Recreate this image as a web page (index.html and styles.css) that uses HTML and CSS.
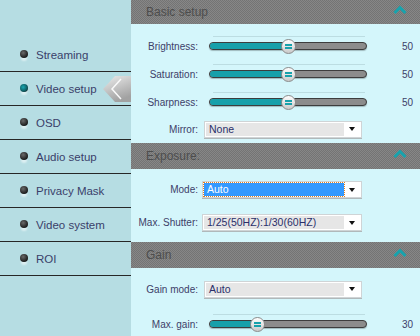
FILE: index.html
```html
<!DOCTYPE html>
<html lang="en">
  <head>
    <meta charset="UTF-8" />
    <title>Video setup</title>
    <link rel="stylesheet" href="styles.css">
  </head>
  <body>
    <div class="app">
      <nav class="menu">
        <ul>
          <li class="menu-item"><span class="dot"></span>Streaming</li>
          <li class="menu-item active"><span class="dot"></span>Video setup
            <svg class="pointer" width="28" height="28" viewBox="0 0 28 28">
              <defs>
                <linearGradient id="pg" x1="0" y1="0" x2="0.4" y2="1">
                  <stop offset="0" stop-color="#ececec" />
                  <stop offset="1" stop-color="#a2a2a2" />
                </linearGradient>
              </defs>
              <polygon points="0,13 12,0 28,0 28,26 12,26" fill="url(#pg)" />
              <polyline points="18,3 9,13 18,23" fill="none" stroke="#fafafa" stroke-width="1.5" />
            </svg>
          </li>
          <li class="menu-item"><span class="dot"></span>OSD</li>
          <li class="menu-item"><span class="dot"></span>Audio setup</li>
          <li class="menu-item"><span class="dot"></span>Privacy Mask</li>
          <li class="menu-item"><span class="dot"></span>Video system</li>
          <li class="menu-item"><span class="dot"></span>ROI</li>
        </ul>
      </nav>
      <main class="panel">
        <section class="group">
          <div class="group-head first">
            <span>Basic setup</span>
            <svg class="fold" width="14" height="10" viewBox="0 0 14 10"><polyline points="1.5,8 7,2.5 12.5,8" fill="none" stroke="#17a3ad" stroke-width="3" /></svg>
          </div>
          <div class="group-body basic">
            <div class="row slide">
              <label>Brightness:</label>
              <div class="track"><div class="fill" style="width:50%"></div><span class="thumb" style="left:50%"></span></div>
              <span class="val">50</span>
            </div>
            <div class="row slide">
              <label>Saturation:</label>
              <div class="track"><div class="fill" style="width:50%"></div><span class="thumb" style="left:50%"></span></div>
              <span class="val">50</span>
            </div>
            <div class="row slide">
              <label>Sharpness:</label>
              <div class="track"><div class="fill" style="width:50%"></div><span class="thumb" style="left:50%"></span></div>
              <span class="val">50</span>
            </div>
            <div class="row pick short">
              <label>Mirror:</label>
              <div class="select"><span class="value">None</span><span class="caret"></span></div>
            </div>
          </div>
        </section>
        <section class="group">
          <div class="group-head">
            <span>Exposure:</span>
            <svg class="fold" width="14" height="10" viewBox="0 0 14 10"><polyline points="1.5,8 7,2.5 12.5,8" fill="none" stroke="#17a3ad" stroke-width="3" /></svg>
          </div>
          <div class="group-body exposure">
            <div class="row pick tall">
              <label>Mode:</label>
              <div class="select wide focus"><span class="value">Auto</span><span class="caret"></span></div>
            </div>
            <div class="row pick tall">
              <label>Max. Shutter:</label>
              <div class="select wide"><span class="value">1/25(50HZ):1/30(60HZ)</span><span class="caret"></span></div>
            </div>
          </div>
        </section>
        <section class="group">
          <div class="group-head">
            <span>Gain</span>
            <svg class="fold" width="14" height="10" viewBox="0 0 14 10"><polyline points="1.5,8 7,2.5 12.5,8" fill="none" stroke="#17a3ad" stroke-width="3" /></svg>
          </div>
          <div class="group-body gain">
            <div class="row pick">
              <label>Gain mode:</label>
              <div class="select"><span class="value">Auto</span><span class="caret"></span></div>
            </div>
            <div class="row slide">
              <label>Max. gain:</label>
              <div class="track"><div class="fill" style="width:30%"></div><span class="thumb" style="left:30%"></span></div>
              <span class="val">30</span>
            </div>
          </div>
        </section>
      </main>
    </div>
  </body>
</html>
```

FILE: styles.css
```css
html, body {
  margin: 0;
  padding: 0;
}
body {
  font-family: 'Liberation Sans', Arial, sans-serif;
  width: 420px;
  height: 336px;
  overflow: hidden;
}
.app {
  display: flex;
  height: 336px;
}
.menu {
  width: 131px;
  flex: none;
  background-color: #b6dde3;
  padding-top: 38px;
}
.menu ul {
  list-style: none;
  margin: 0;
  padding: 0;
}
.menu-item {
  position: relative;
  display: flex;
  align-items: center;
  gap: 8px;
  height: 33px;
  padding-left: 20px;
  border-bottom: 1px solid #262626;
  font-size: 11.5px;
  color: #3a3f6a;
}
.dot {
  width: 8px;
  height: 8px;
  margin-top: -2px;
  border-radius: 50%;
  background: radial-gradient(circle at 40% 35%, #6a6a6a, #1c1c1c 70%);
  box-shadow: 0 4px 2px -1px rgba(255, 255, 255, 0.55);
}
.active .dot {
  background: radial-gradient(circle at 40% 40%, #1ba8b2, #0d5a60 60%, #1a1a1a 85%);
}
.pointer {
  position: absolute;
  right: 0;
  top: 4px;
}
.panel {
  flex: 1;
  background-color: #d4f6fb;
}
.group-head {
  height: 26px;
  display: flex;
  align-items: center;
  justify-content: space-between;
  padding: 0 13px 0 15px;
  background-color: #7d7d7d;
  background-image: repeating-conic-gradient(#747474 0 25%, #878787 0 50%);
  background-size: 2px 2px;
  font-size: 12px;
  color: #4d4d4d;
}
.group-head.first {
  height: 24px;
}
.fold {
  margin-top: -4px;
}
.group-body {
  display: flex;
  flex-direction: column;
}
.basic {
  padding: 8px 0 1px;
}
.exposure {
  padding: 4px 0 3px;
}
.gain {
  padding-top: 7px;
  gap: 7px;
}
.row {
  display: flex;
  align-items: center;
  height: 28px;
  font-size: 10px;
  color: #3d4068;
}
.row.short {
  height: 26px;
}
.row.tall {
  height: 33px;
}
.row label {
  width: 67px;
  flex: none;
  text-align: right;
}
.track {
  position: relative;
  width: 156px;
  height: 6px;
  margin-left: 11px;
  border: 1px solid #3d3d3d;
  border-radius: 4px;
  background-color: #8c8c8c;
  box-shadow: 0 1px 1px rgba(0, 0, 0, 0.25);
}
.track::before {
  content: "";
  position: absolute;
  left: 3px;
  right: 1px;
  top: -7px;
  height: 1px;
  background-color: #bcdde2;
}
.fill {
  height: 100%;
  border-radius: 3px 0 0 3px;
  background-color: #17a0aa;
}
.thumb {
  position: absolute;
  top: 50%;
  width: 13px;
  height: 13px;
  margin: -7px 0 0 -7px;
  border: 1px solid #8a8a8a;
  border-radius: 50%;
  background: linear-gradient(#ffffff, #c9c9c9);
}
.thumb::after {
  content: "";
  position: absolute;
  left: 3px;
  right: 3px;
  top: 4px;
  height: 5px;
  border-top: 2px solid #18a1ab;
  border-bottom: 2px solid #18a1ab;
  box-sizing: border-box;
}
.val {
  flex: 1;
  text-align: right;
  padding-right: 7px;
  font-size: 10px;
}
.select {
  display: flex;
  align-items: center;
  width: 154px;
  height: 13px;
  margin-left: 6px;
  padding: 1px;
  border: 1px solid #cfd4d6;
  background-color: #ffffff;
  box-shadow: 0 1px 0 #b0b8ba;
}
.select.wide {
  margin-left: 4px;
  width: 156px;
}
.select .value {
  flex: 1;
  height: 13px;
  line-height: 13px;
  padding-left: 3px;
  background-color: #e6e6e6;
  color: #2a2f6a;
  font-size: 10.5px;
  white-space: nowrap;
  overflow: hidden;
}
.select.focus .value {
  background-color: #3399ff;
  color: #ffffff;
  outline: 1px dotted #e08020;
}
.caret {
  width: 16px;
  display: flex;
  justify-content: center;
}
.caret::before {
  content: "";
  border-left: 3.5px solid transparent;
  border-right: 3.5px solid transparent;
  border-top: 4px solid #111111;
}
```
